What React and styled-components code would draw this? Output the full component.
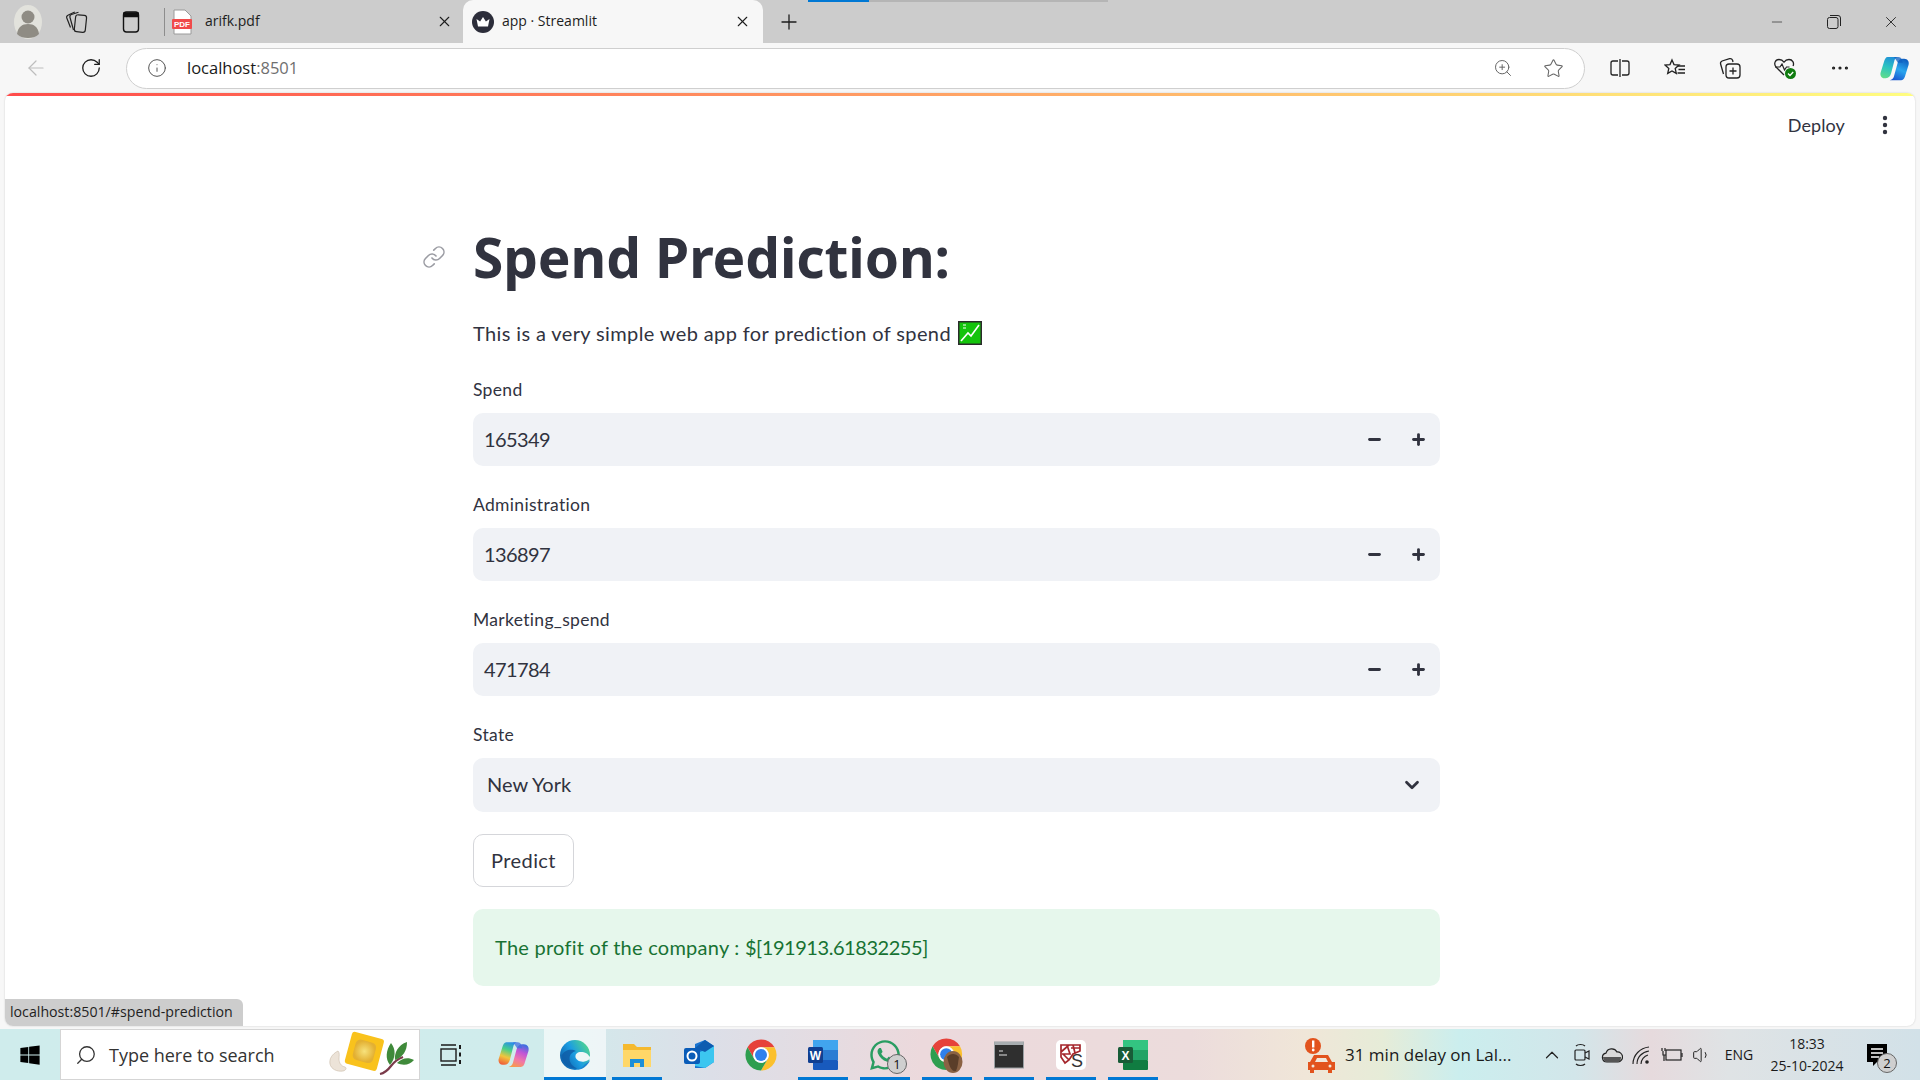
import React from "react";
import styled, { createGlobalStyle } from "styled-components";
import {
  ArrowLeft,
  ChevronDown,
  ChevronUp,
  Info,
  Link as LinkIcon,
  Minus,
  MoreHorizontal,
  Plus,
  RotateCw,
  Search,
  Star,
  Volume1,
  X,
  ZoomIn,
} from "lucide-react";
import { FaWhatsapp, FaWindows } from "react-icons/fa";

const streamlitFont = `Lato, "Noto Sans", sans-serif`;
const systemFont = `"Open Sans", "Noto Sans", sans-serif`;

const GlobalStyle = createGlobalStyle`
  html, body {
    margin: 0;
    padding: 0;
    overflow: hidden;
    background: #f7f7f7;
  }
  * {
    box-sizing: border-box;
  }
`;

const Screen = styled.div`
  width: 1920px;
  height: 1080px;
  display: grid;
  grid-template-columns: 1920px;
  grid-template-rows: 43px 50px 1fr 51px;
  position: relative;
  background: #f7f7f7;
  font-family: ${systemFont};
`;

/* ---------- tab strip ---------- */

const TabStrip = styled.div`
  display: flex;
  align-items: center;
  background: #cccccc;
  padding-left: 10px;
  position: relative;
`;

const LoadBar = styled.div`
  position: absolute;
  top: 0;
  left: 808px;
  width: 300px;
  height: 2px;
  background: linear-gradient(to right, #0078d4 0 61px, #b5b5b5 61px);
`;

const StripButton = styled.div`
  width: ${(p) => p.$w || 53}px;
  flex: none;
  display: flex;
  align-items: center;
  justify-content: center;
  color: #1c1c1c;
`;

const Divider = styled.div`
  width: 1px;
  height: 28px;
  background: #8d8d8d;
  margin: 0 7px 0 10px;
`;

const Tab = styled.div`
  width: ${(p) => p.$w}px;
  height: ${(p) => (p.$active ? "43px" : "auto")};
  flex: none;
  display: flex;
  align-items: center;
  gap: ${(p) => (p.$active ? 8 : 13)}px;
  padding: ${(p) => (p.$active ? "0 12px 0 9px" : "0 10px 0 0")};
  font-size: 14px;
  color: #1d1d1d;
  background: ${(p) => (p.$active ? "#f7f7f7" : "transparent")};
  border-radius: ${(p) => (p.$active ? "10px 10px 0 0" : "0")};
`;

const TabTitle = styled.span`
  flex: 1;
  white-space: nowrap;
  padding-bottom: 2px;
`;

const WindowControls = styled.div`
  margin-left: auto;
  display: flex;
  padding-right: 1px;
`;

const WindowButton = styled.div`
  width: 57px;
  display: flex;
  justify-content: center;
  align-items: center;
  color: #222;
`;

/* ---------- address bar ---------- */

const AddressBar = styled.div`
  display: flex;
  align-items: center;
  background: #f7f7f7;
  padding-left: 8px;
`;

const NavButton = styled.div`
  width: ${(p) => p.$w || 55}px;
  flex: none;
  display: flex;
  justify-content: center;
  align-items: center;
  color: ${(p) => p.$color || "#1c1c1c"};
`;

const UrlPill = styled.div`
  width: 1459px;
  height: 41px;
  margin-left: 8px;
  flex: none;
  display: flex;
  align-items: center;
  background: #fff;
  border: 1px solid #cfcfcf;
  border-radius: 21px;
  padding: 0 6px 0 20px;
`;

const UrlText = styled.div`
  margin-left: 20px;
  padding-bottom: 2px;
  font-size: 16.5px;
  color: #1a1a1a;
  flex: 1;

  span {
    color: #6f6f6f;
  }
`;

const ToolIcons = styled.div`
  display: flex;
  margin-left: 7px;
`;

/* ---------- streamlit page ---------- */

const AppFrame = styled.div`
  margin: 0 5px 3px 5px;
  background: #fff;
  border-radius: 8px;
  overflow: hidden;
  position: relative;
  box-shadow: 0 0 2px rgba(0, 0, 0, 0.18);
  font-family: ${streamlitFont};
  color: #31333f;
`;

const Decoration = styled.div`
  height: 3px;
  background: linear-gradient(to right, #ff4b4b, #fffd80);
`;

const AppHeader = styled.div`
  height: 58px;
  display: flex;
  align-items: center;
  justify-content: flex-end;
  gap: 37px;
  padding-right: 27px;
`;

const DeployLink = styled.span`
  font-size: 18px;
  letter-spacing: 0.1px;
`;

const Main = styled.main`
  width: 967px;
  margin-left: 468px;
  padding-top: 66px;
  display: flex;
  flex-direction: column;
`;

const TitleRow = styled.div`
  position: relative;
`;

const Title = styled.h1`
  margin: 0;
  padding-bottom: 1px;
  height: 76px;
  font-family: "Noto Sans", sans-serif;
  font-size: 55px;
  line-height: 74px;
  font-weight: 700;
  letter-spacing: -0.1px;
  color: #31333f;
`;

const Anchor = styled.div`
  position: absolute;
  left: -51px;
  top: 25px;
  color: #9b9ca3;
  display: flex;
`;

const Intro = styled.p`
  margin: 21px 0 26px;
  font-size: 20px;
  line-height: 32px;
  letter-spacing: 0.38px;
  display: flex;
  align-items: center;
  gap: 7px;
`;

const Fields = styled.div`
  display: flex;
  flex-direction: column;
  gap: 24px;
`;

const Field = styled.div`
  display: flex;
  flex-direction: column;
  gap: 8px;
`;

const FieldLabel = styled.label`
  font-size: 17.5px;
  line-height: 30px;
  letter-spacing: 0.32px;
`;

const InputBox = styled.div`
  height: ${(p) => p.$h || 53}px;
  background: #f0f2f6;
  border-radius: 10px;
  display: flex;
  align-items: center;
  font-size: 20px;
  padding-left: ${(p) => p.$pad || 11}px;
`;

const InputValue = styled.span`
  flex: 1;
  padding-bottom: 2px;
  letter-spacing: ${(p) => (p.$digits ? "-0.6px" : "0")};
`;

const Stepper = styled.div`
  width: 44px;
  height: 100%;
  display: flex;
  align-items: center;
  justify-content: center;
  color: #31333f;
`;

const SelectArrow = styled.div`
  width: 57px;
  display: flex;
  justify-content: center;
  color: #31333f;
`;

const PredictButton = styled.button`
  align-self: flex-start;
  margin-top: 22px;
  width: 101px;
  height: 53px;
  padding: 0 0 2px;
  background: #fff;
  border: 1px solid #d5d6da;
  border-radius: 10px;
  font-family: ${streamlitFont};
  font-size: 20px;
  letter-spacing: 0.4px;
  color: #31333f;
`;

const SuccessBox = styled.div`
  margin-top: 22px;
  height: 77px;
  background: #e6f7ec;
  border-radius: 10px;
  display: flex;
  align-items: center;
  padding: 0 0 2px 22px;
  font-size: 20px;
  letter-spacing: 0.25px;
  white-space: pre;
  color: #177233;
`;

const SuccessDigits = styled.span`
  letter-spacing: -0.45px;
`;

const StatusBubble = styled.div`
  position: absolute;
  left: 0;
  bottom: 0;
  width: 238px;
  height: 27px;
  background: #cdcdcd;
  border-radius: 0 6px 0 0;
  padding: 0 0 2px 5px;
  display: flex;
  align-items: center;
  font-family: ${systemFont};
  font-size: 14.2px;
  color: #1f1f1f;
  white-space: nowrap;
`;

/* ---------- taskbar ---------- */

const Taskbar = styled.div`
  display: flex;
  align-items: stretch;
  background: linear-gradient(
    to right,
    #cfecec 0%,
    #d0ecec 28%,
    #dcdfe8 37%,
    #ecd9dc 48%,
    #ecdcdc 62%,
    #f0e6d8 68%,
    #e6ecd8 72%,
    #cbeeee 76%,
    #d2e6ea 82%,
    #e6dadd 86%,
    #dfe3e5 90%,
    #d2e1e8 100%
  );
  color: #1a1a1a;
`;

const StartButton = styled.div`
  width: 60px;
  flex: none;
  display: flex;
  align-items: center;
  justify-content: center;
  color: #000;
`;

const SearchBox = styled.div`
  width: 360px;
  flex: none;
  display: flex;
  align-items: center;
  background: #fff;
  border: 1px solid #d5d5d5;
  padding-left: 14px;
  position: relative;
  font-size: 18px;
  color: #333;
`;

const SearchLabel = styled.span`
  margin-left: 12px;
`;

const SearchArt = styled.div`
  position: absolute;
  right: 4px;
  top: 0;
  display: flex;
`;

const TaskSlot = styled.div`
  width: 62px;
  flex: none;
  display: flex;
  align-items: center;
  justify-content: center;
  position: relative;
  background: ${(p) => (p.$focus ? "rgba(255,255,255,0.6)" : "transparent")};

  &::after {
    content: "";
    display: ${(p) => (p.$open ? "block" : "none")};
    position: absolute;
    bottom: 0;
    left: ${(p) => (p.$focus ? 0 : 6)}px;
    right: ${(p) => (p.$focus ? 0 : 6)}px;
    height: 3px;
    background: #0078d4;
  }
`;

const CountBadge = styled.span`
  position: absolute;
  right: ${(p) => p.$right || 9}px;
  bottom: ${(p) => p.$bottom || 6}px;
  width: 20px;
  height: 20px;
  border-radius: 50%;
  background: #cfcfcf;
  border: 1px solid #666;
  font-size: 13px;
  display: flex;
  align-items: center;
  justify-content: center;
  color: #111;
`;

const WeatherNews = styled.div`
  margin-left: 141px;
  width: 210px;
  flex: none;
  display: flex;
  align-items: center;
  gap: 8px;
  font-size: 17px;
  white-space: nowrap;
`;

const Tray = styled.div`
  display: flex;
  align-items: center;
  margin-left: 22px;
`;

const TrayIcon = styled.div`
  width: 30px;
  flex: none;
  display: flex;
  justify-content: center;
  color: #222;
`;

const TrayText = styled.div`
  font-size: 14px;
  width: 44px;
  text-align: center;
`;

const Clock = styled.div`
  width: 92px;
  text-align: center;
  font-size: 14px;
  line-height: 22px;
`;

const NotifyButton = styled.div`
  margin-left: 2px;
  width: 44px;
  height: 100%;
  position: relative;
  display: flex;
  align-items: center;
  justify-content: center;
`;

/* ---------- drawn icons ---------- */

const ProfileIcon = () => (
  <svg width="30" height="36" viewBox="0 0 30 36">
    <ellipse cx="15" cy="18" rx="14" ry="17" fill="#e2e2dc" />
    <circle cx="15" cy="13" r="6.5" fill="#8f8c84" />
    <path d="M4 30c1-7 5-10 11-10s10 3 11 10c-3 3-7 4-11 4s-8-1-11-4z" fill="#8f8c84" />
  </svg>
);

const CollectionsTabIcon = () => (
  <svg width="24" height="26" viewBox="0 0 24 26" fill="none" stroke="#222" strokeWidth="1.2">
    <rect x="10" y="6" width="11" height="17" rx="2.5" transform="rotate(6 15 14)" />
    <path d="M8.5 21L5 8.5c-.4-1.5.3-2.600 1.500-3l7-2.300" />
    <path d="M5.500 18.500L1.800 9c-.5-1.500.3-2.500 1.500-3l6.500-3" />
  </svg>
);

const VerticalTabsIcon = () => (
  <svg width="20" height="24" viewBox="0 0 20 24" fill="none" stroke="#111" strokeWidth="1.4">
    <rect x="2.5" y="2" width="15" height="20" rx="3" />
    <path d="M3 3h14v3.500H3z" fill="#111" />
  </svg>
);

const PdfIcon = () => (
  <svg width="20" height="26" viewBox="0 0 20 26">
    <path d="M2 1h11l6 6v18H2z" fill="#fff" stroke="#9a9a9a" strokeWidth="1" />
    <rect x="0" y="10" width="20" height="10" rx="1" fill="#f04a4a" />
    <text x="10" y="18" fontSize="8" fontWeight="700" fill="#fff" textAnchor="middle" fontFamily="Liberation Sans, sans-serif">
      PDF
    </text>
  </svg>
);

const StreamlitFavicon = () => (
  <svg width="22" height="22" viewBox="0 0 22 22">
    <circle cx="11" cy="11" r="11" fill="#2c2d3a" />
    <path d="M4.5 8l3.6 2.4L11 6l2.9 4.4L17.5 8 16 15.5H6z" fill="#fff" />
  </svg>
);

const RestoreIcon = () => (
  <svg width="14" height="14" viewBox="0 0 14 14" fill="none" stroke="#222" strokeWidth="1">
    <rect x="0.5" y="2.5" width="10.5" height="11" rx="2" />
    <path d="M3 .5h8a2.5 2.5 0 0 1 2.5 2.5v8" />
  </svg>
);

const SplitIcon = () => (
  <svg width="20" height="20" viewBox="0 0 20 20" fill="none" stroke="#222" strokeWidth="1.3">
    <path d="M8 3H3a2 2 0 0 0-2 2v10a2 2 0 0 0 2 2h5M12 3h5a2 2 0 0 1 2 2v10a2 2 0 0 1-2 2h-5M10 1v18" />
  </svg>
);

const FavoritesIcon = () => (
  <svg width="22" height="20" viewBox="0 0 22 20" fill="none" stroke="#222" strokeWidth="1.3">
    <path d="M8 2l2 4.6 5 .5-3.8 3.3 1.1 5L8 13l-4.3 2.4 1.1-5L1 7.1l5-.5z" />
    <path d="M14 8h7M14.5 11.5H21M13.5 15H21" />
  </svg>
);

const CollectionsIcon = () => (
  <svg width="22" height="22" viewBox="0 0 22 22" fill="none" stroke="#222" strokeWidth="1.3">
    <rect x="7" y="7" width="14" height="14" rx="3" />
    <path d="M14 10.5v7M10.5 14h7" />
    <path d="M4.5 17L1.6 7c-.4-1.5.3-2.5 1.5-3l7.5-2.3c1.3-.3 2.4.2 3 1.6L14 5" />
  </svg>
);

const HealthIcon = () => (
  <svg width="24" height="24" viewBox="0 0 24 24" fill="none">
    <path
      d="M11 19L3 11C.5 8 2 3.5 6 3.5c2 0 3.800 1 5 2.700 1.200-1.700 3-2.700 5-2.700 3.500 0 5.500 3.500 4 6.500"
      stroke="#222"
      strokeWidth="1.3"
    />
    <path d="M2 11h5l2-3 2.500 6 2-3h3" stroke="#222" strokeWidth="1.2" />
    <circle cx="17.5" cy="17.5" r="5.5" fill="#107c10" />
    <path d="M15 17.5l2 2 3.200-3.500" stroke="#fff" strokeWidth="1.3" />
  </svg>
);

// Copilot mark, used in the toolbar and in the taskbar with other colours
const CopilotMark = ({ id, size, left, right }) => (
  <svg width={size} height={size} viewBox="0 0 32 28">
    <defs>
      <linearGradient id={`${id}L`} x1="0.6" y1="0" x2="0.3" y2="1">
        {left.map((c, i) => (
          <stop key={c} offset={i / (left.length - 1)} stopColor={c} />
        ))}
      </linearGradient>
      <linearGradient id={`${id}R`} x1="0.7" y1="0" x2="0.3" y2="1">
        {right.map((c, i) => (
          <stop key={c} offset={i / (right.length - 1)} stopColor={c} />
        ))}
      </linearGradient>
    </defs>
    <path
      d="M9 2h11c-2 0-3.500 1.500-4 3.500L12.500 19C11.800 22 10 24 7 24H5.500C2.500 24 .8 21 1.700 18L5 7.500C6 4 7 2 9 2z"
      fill={`url(#${id}L)`}
    />
    <path
      d="M23 26H11c2 0 3.800-1.500 4.400-3.700L19 9c.8-3 2.500-5 5.500-5h1.500c3.500 0 5.500 3 4.500 6.500L27.500 20C26.500 24 25.500 26 23 26z"
      fill={`url(#${id}R)`}
    />
    <path d="M15.500 2H20c2 0 3 1 3.600 2.800L24.500 8h-5z" fill={right[0]} opacity="0.75" />
  </svg>
);

const TaskViewIcon = () => (
  <svg width="22" height="24" viewBox="0 0 22 24" fill="none" stroke="#1a1a1a" strokeWidth="1.4">
    <path d="M1 2h15M1 22h15" />
    <rect x="1" y="6" width="15" height="12" />
    <path d="M20 2v4M20 9.500v4M20 17v4" strokeWidth="2" />
  </svg>
);

const EdgeIcon = () => (
  <svg width="32" height="32" viewBox="0 0 32 32">
    <defs>
      <linearGradient id="edgeA" x1="0" y1="0.8" x2="1" y2="0.2">
        <stop offset="0" stopColor="#0c59a4" />
        <stop offset="0.5" stopColor="#1b9de2" />
        <stop offset="1" stopColor="#54d98a" />
      </linearGradient>
    </defs>
    <circle cx="16" cy="16" r="15" fill="url(#edgeA)" />
    <path d="M31.500 19C29 14.500 26 13 22 13c-3.500 0-6 2-5.500 5 .5 3 4.500 5.500 9 4.500 2.500-.6 4.500-1.800 6-3.500z" fill="#eef7f7" />
    <path d="M17 12c-4 1-6.500 4-6.500 7.500 0 4.500 3.500 8.500 8 10-7 1-15-4-16-13 3-6 10-7 14.500-4.500z" fill="#0f5ea8" opacity="0.85" />
    <path d="M31 21c-2 6-8 10-14 10 4-1 7-3 9-6 2-1 3.500-2.500 5-4z" fill="#1b86d0" />
  </svg>
);

const FilesIcon = () => (
  <svg width="30" height="28" viewBox="0 0 30 28">
    <path d="M1 3h11l3 3h14v20H1z" fill="#f5b92e" />
    <rect x="1" y="9" width="28" height="17" fill="#ffd768" />
    <path d="M8 26v-8h14v8h-4v-4h-6v4z" fill="#1c8fd8" />
  </svg>
);

const OutlookIcon = () => (
  <svg width="32" height="32" viewBox="0 0 32 32">
    <path d="M12 5l10-4 9 6v16l-9 6H12z" fill="#1a74d0" />
    <path d="M12 15l19-8v16l-9 6-10-2z" fill="#3cc6f0" />
    <path d="M22 1l9 6-9 6-10-4z" fill="#0f5cb0" />
    <rect x="1" y="9" width="16" height="16" rx="2" fill="#0a5cb8" />
    <circle cx="9" cy="17" r="4.5" fill="none" stroke="#fff" strokeWidth="2" />
  </svg>
);

const ChromeBall = () => (
  <>
    <path d="M43.050 13A22 22 0 0 0 4.950 13l9.550 16.500A11 11 0 0 1 24 13z" fill="#e6423a" />
    <path d="M43.050 13A22 22 0 0 1 24 46l9.500-16.500A11 11 0 0 0 24 13z" fill="#fbc02d" />
    <path d="M24 46A22 22 0 0 1 4.950 13l9.550 16.500a11 11 0 0 0 19 0z" fill="#2e9e4f" />
    <circle cx="24" cy="24" r="11" fill="#fff" />
    <circle cx="24" cy="24" r="8.5" fill="#2f80ed" />
  </>
);

const ChromeIcon = () => (
  <svg width="34" height="34" viewBox="0 0 48 48">
    <ChromeBall />
  </svg>
);

const ProfileChromeIcon = () => (
  <svg width="36" height="36" viewBox="0 0 36 36">
    <g transform="scale(0.72)">
      <ChromeBall />
    </g>
    <ellipse cx="24" cy="25" rx="9.5" ry="11" fill="#8a6244" />
    <path d="M18 20c3-4 9-4 12 0-1 5-1 10-3 14-4 1-6-4-7-7z" fill="#3a2718" opacity="0.6" />
  </svg>
);

const OfficeTile = ({ colors, letter, badge }) => (
  <svg width="32" height="32" viewBox="0 0 32 32">
    <rect x="6" y="1" width="25" height="10" fill={colors[0]} />
    <rect x="6" y="11" width="25" height="10" fill={colors[1]} />
    <rect x="6" y="21" width="25" height="10" rx="1" fill={colors[2]} />
    <rect x="1" y="8" width="15" height="16" rx="1.5" fill={badge} />
    <text x="8.5" y="20.5" fontSize="12" fontWeight="700" fill="#fff" textAnchor="middle" fontFamily="Liberation Sans, sans-serif">
      {letter}
    </text>
  </svg>
);

const ConsoleIcon = () => (
  <svg width="30" height="30" viewBox="0 0 30 30">
    <rect x="0.5" y="2" width="29" height="26" fill="#2f2f2f" stroke="#9aa0a3" />
    <rect x="0.5" y="2" width="29" height="3" fill="#a8adb0" />
    <path d="M5 11h4M5 15h8" stroke="#a7a7a7" strokeWidth="1.5" />
  </svg>
);

const SketchIcon = () => (
  <svg width="30" height="30" viewBox="0 0 30 30">
    <rect width="30" height="30" rx="5" fill="#fff" />
    <path
      d="M5 5h19v6l-7 3-4 6-4 3-4-6zM5 12l8-7M11 5l3 9-8 0M17 5l2 8M24 8l-9 0M13 20l-6-6"
      fill="none"
      stroke="#a5262c"
      strokeWidth="1.7"
    />
    <text x="21" y="27" fontSize="18" fontWeight="400" fill="#333" textAnchor="middle" fontFamily="Liberation Sans, sans-serif">
      S
    </text>
  </svg>
);

const CarAlertIcon = () => (
  <svg width="32" height="38" viewBox="0 0 32 38">
    <circle cx="8" cy="10" r="8" fill="#e2531d" />
    <rect x="7" y="4.5" width="2.4" height="7" fill="#fff" />
    <circle cx="8.2" cy="14" r="1.4" fill="#fff" />
    <path d="M9 19h14l4 7h3v8h-3v3h-4v-3H9v3H5v-3H3v-8h2l4-7z" fill="#e2531d" />
    <path d="M10 26l2-4h9l2 4z" fill="#f1e8dc" />
    <circle cx="8" cy="30" r="1.5" fill="#f1e8dc" />
    <circle cx="25" cy="30" r="1.5" fill="#f1e8dc" />
  </svg>
);

const MeetIcon = () => (
  <svg width="18" height="26" viewBox="0 0 18 26" fill="none" stroke="#222" strokeWidth="1.2">
    <rect x="2" y="8" width="10" height="10" rx="1" />
    <path d="M12 11l4-2v8l-4-2" />
    <path d="M3 4c2-2 7-2 9 0M3 22c2 2 7 2 9 0" />
  </svg>
);

const CloudIcon = () => (
  <svg width="22" height="18" viewBox="0 0 22 18">
    <path d="M6 16a4.500 4.500 0 0 1-1-8.900A6 6 0 0 1 16 6a5 5 0 0 1 1 10z" fill="#d9d9d9" stroke="#222" strokeWidth="1.2" />
    <path d="M2 11h18c0 3-1 5-4 5H6c-2 0-4-2-4-5z" fill="#555" />
  </svg>
);

const WifiIcon = () => (
  <svg width="20" height="20" viewBox="0 0 20 20" fill="none" stroke="#222" strokeWidth="1.1">
    <path d="M1 19C1 10 8 3 17 2M5 19C5 12 10 7 17 6M9 19c0-4 3-8 7-9" />
    <circle cx="15" cy="17" r="1.8" fill="#222" stroke="none" />
  </svg>
);

const BatteryIcon = () => (
  <svg width="22" height="18" viewBox="0 0 22 18" fill="none" stroke="#222" strokeWidth="1.2">
    <rect x="5" y="4" width="15" height="10" />
    <path d="M21 7v4" />
    <path d="M2 5v4h3M4 2v3M1 2v3M3 9v6" />
  </svg>
);

const ChatIcon = () => (
  <svg width="22" height="24" viewBox="0 0 22 24">
    <path d="M1 1h20v18h-10l-4 4v-4H1z" fill="#000" />
    <path d="M5 6h12M5 10h12M5 14h8" stroke="#fff" strokeWidth="1.3" />
  </svg>
);

const SearchDecoration = () => (
  <svg width="86" height="49" viewBox="0 0 86 49">
    <defs>
      <radialGradient id="pastaFill">
        <stop offset="0" stopColor="#f7e27c" />
        <stop offset="1" stopColor="#e3b032" />
      </radialGradient>
    </defs>
    <path d="M9 21C3 24 0 29 1 34c1 5 7 8 13 7 3-.6 4-3 2-4-4-1-6-4-6-8 0-3 1-6-1-8z" fill="#ece3d8" stroke="#c9bba8" strokeWidth="0.6" />
    <rect x="19" y="5" width="33" height="33" rx="3" transform="rotate(15 36 21)" fill="#f9c21c" />
    <rect x="25" y="11" width="21" height="21" rx="5" transform="rotate(15 36 21)" fill="url(#pastaFill)" />
    <path d="M51 44c5-1 8-4 11-8s7-7 12-9" stroke="#7a3a4a" strokeWidth="2.2" fill="none" />
    <path d="M61 35c-5-6-4-15 1-22 5 6 5 15-1 22zM66 30c-1-7 3-15 12-18 0 9-4 15-12 18zM68 33c5-5 11-6 17-3-4 5-11 6-17 3z" fill="#3f8a3a" />
  </svg>
);

const NumberField = ({ label, value }) => (
  <Field>
    <FieldLabel>{label}</FieldLabel>
    <InputBox>
      <InputValue $digits>{value}</InputValue>
      <Stepper>
        <Minus size={17} strokeWidth={4} />
      </Stepper>
      <Stepper>
        <Plus size={17} strokeWidth={4} />
      </Stepper>
    </InputBox>
  </Field>
);

export default function App() {
  return (
    <Screen>
      <GlobalStyle />

      <TabStrip>
        <LoadBar />
        <StripButton $w={36}>
          <ProfileIcon />
        </StripButton>
        <StripButton $w={62}>
          <CollectionsTabIcon />
        </StripButton>
        <StripButton $w={46}>
          <VerticalTabsIcon />
        </StripButton>
        <Divider />
        <Tab $w={291}>
          <PdfIcon />
          <TabTitle>arifk.pdf</TabTitle>
          <X size={17} strokeWidth={1.5} />
        </Tab>
        <Tab $active $w={300}>
          <StreamlitFavicon />
          <TabTitle>app · Streamlit</TabTitle>
          <X size={17} strokeWidth={1.5} />
        </Tab>
        <StripButton $w={52}>
          <Plus size={24} strokeWidth={1.3} />
        </StripButton>
        <WindowControls>
          <WindowButton>
            <Minus size={16} strokeWidth={1} />
          </WindowButton>
          <WindowButton>
            <RestoreIcon />
          </WindowButton>
          <WindowButton>
            <X size={18} strokeWidth={1.2} />
          </WindowButton>
        </WindowControls>
      </TabStrip>

      <AddressBar>
        <NavButton $color="#bdbdbd">
          <ArrowLeft size={24} strokeWidth={1.2} />
        </NavButton>
        <NavButton>
          <RotateCw size={22} strokeWidth={1.4} />
        </NavButton>
        <UrlPill>
          <Info size={20} strokeWidth={1.2} color="#555" />
          <UrlText>
            localhost<span>:8501</span>
          </UrlText>
          <NavButton $w={50} $color="#666">
            <ZoomIn size={20} strokeWidth={1.2} />
          </NavButton>
          <NavButton $w={50} $color="#666">
            <Star size={21} strokeWidth={1.2} />
          </NavButton>
        </UrlPill>
        <ToolIcons>
          <NavButton>
            <SplitIcon />
          </NavButton>
          <NavButton>
            <FavoritesIcon />
          </NavButton>
          <NavButton>
            <CollectionsIcon />
          </NavButton>
          <NavButton>
            <HealthIcon />
          </NavButton>
          <NavButton>
            <MoreHorizontal size={22} strokeWidth={1.5} />
          </NavButton>
          <NavButton>
            <CopilotMark
              id="toolCop"
              size={31}
              left={["#1f8fd8", "#2cc4c0", "#5fdc8c"]}
              right={["#0f5fc0", "#2aa6ee", "#1a58d0"]}
            />
          </NavButton>
        </ToolIcons>
      </AddressBar>

      <AppFrame>
        <Decoration />
        <AppHeader>
          <DeployLink>Deploy</DeployLink>
          <svg width="6" height="20" viewBox="0 0 6 20" fill="#31333f">
            <circle cx="3" cy="3" r="2.2" />
            <circle cx="3" cy="10" r="2.2" />
            <circle cx="3" cy="17" r="2.2" />
          </svg>
        </AppHeader>
        <Main>
          <TitleRow>
            <Anchor>
              <LinkIcon size={24} strokeWidth={1.6} />
            </Anchor>
            <Title>Spend Prediction:</Title>
          </TitleRow>
          <Intro>
            This is a very simple web app for prediction of spend
            <svg width="24" height="24" viewBox="0 0 24 24">
              <rect width="24" height="24" fill="#2b2b2b" />
              <rect x="1.5" y="1.5" width="21" height="21" fill="#14c40c" />
              <path d="M3 20l7-8 3 3 8-11" fill="none" stroke="#fff" strokeWidth="1.6" />
              <path d="M5 4h3M5 7h3" stroke="#fff" strokeWidth="1" />
            </svg>
          </Intro>
          <Fields>
            <NumberField label="Spend" value="165349" />
            <NumberField label="Administration" value="136897" />
            <NumberField label="Marketing_spend" value="471784" />
            <Field>
              <FieldLabel>State</FieldLabel>
              <InputBox $h={54} $pad={14}>
                <InputValue>New York</InputValue>
                <SelectArrow>
                  <ChevronDown size={22} strokeWidth={3} />
                </SelectArrow>
              </InputBox>
            </Field>
          </Fields>
          <PredictButton>Predict</PredictButton>
          <SuccessBox>
            {"The profit of the company : "}
            <SuccessDigits>$[191913.61832255]</SuccessDigits>
          </SuccessBox>
        </Main>
        <StatusBubble>localhost:8501/#spend-prediction</StatusBubble>
      </AppFrame>

      <Taskbar>
        <StartButton>
          <FaWindows size={22} />
        </StartButton>
        <SearchBox>
          <Search size={22} strokeWidth={1.4} style={{ transform: "scaleX(-1)" }} />
          <SearchLabel>Type here to search</SearchLabel>
          <SearchArt>
            <SearchDecoration />
          </SearchArt>
        </SearchBox>
        <TaskSlot>
          <TaskViewIcon />
        </TaskSlot>
        <TaskSlot>
          <CopilotMark
            id="taskCop"
            size={33}
            left={["#2a8ee8", "#47cf8a", "#f2c53c", "#ef5f3a"]}
            right={["#3f6fe0", "#c255d6", "#f177a8", "#f79a4c"]}
          />
        </TaskSlot>
        <TaskSlot $open $focus>
          <EdgeIcon />
        </TaskSlot>
        <TaskSlot $open>
          <FilesIcon />
        </TaskSlot>
        <TaskSlot>
          <OutlookIcon />
        </TaskSlot>
        <TaskSlot>
          <ChromeIcon />
        </TaskSlot>
        <TaskSlot $open>
          <OfficeTile colors={["#41a5ee", "#2b7cd3", "#185abd"]} badge="#103f91" letter="W" />
        </TaskSlot>
        <TaskSlot $open>
          <FaWhatsapp size={34} color="#2a9d62" />
          <CountBadge>1</CountBadge>
        </TaskSlot>
        <TaskSlot $open>
          <ProfileChromeIcon />
        </TaskSlot>
        <TaskSlot $open>
          <ConsoleIcon />
        </TaskSlot>
        <TaskSlot $open>
          <SketchIcon />
        </TaskSlot>
        <TaskSlot $open>
          <OfficeTile colors={["#33c481", "#21a366", "#107c41"]} badge="#185c37" letter="X" />
        </TaskSlot>
        <WeatherNews>
          <CarAlertIcon />
          31 min delay on Lal...
        </WeatherNews>
        <Tray>
          <TrayIcon>
            <ChevronUp size={22} strokeWidth={1.3} />
          </TrayIcon>
          <TrayIcon>
            <MeetIcon />
          </TrayIcon>
          <TrayIcon>
            <CloudIcon />
          </TrayIcon>
          <TrayIcon>
            <WifiIcon />
          </TrayIcon>
          <TrayIcon>
            <BatteryIcon />
          </TrayIcon>
          <TrayIcon>
            <Volume1 size={20} strokeWidth={1.2} />
          </TrayIcon>
          <TrayText>ENG</TrayText>
          <Clock>
            18:33
            <br />
            25-10-2024
          </Clock>
          <NotifyButton>
            <ChatIcon />
            <CountBadge $right={2} $bottom={7}>
              2
            </CountBadge>
          </NotifyButton>
        </Tray>
      </Taskbar>
    </Screen>
  );
}
